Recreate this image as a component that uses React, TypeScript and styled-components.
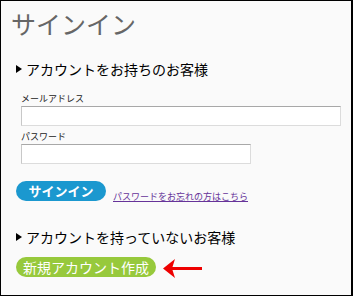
import React from 'react'
import styled, { createGlobalStyle } from 'styled-components'

const GlobalStyle = createGlobalStyle`
  html, body {
    margin: 0;
    padding: 0;
    background: #fafafa;
  }
  body {
    font-family: 'Noto Sans CJK JP', 'DejaVu Sans', sans-serif;
  }
`

const Frame = styled.div`
  box-sizing: border-box;
  width: 353px;
  height: 296px;
  border: 1px solid #000;
  border-right-width: 2px;
  background: #fafafa;
  padding: 6px 0 0 15px;
  overflow: hidden;
`

const Title = styled.h1`
  margin: 0 0 0 -5px;
  font-size: 25px;
  line-height: 32px;
  font-weight: normal;
  color: #666;
`

const SectionHeading = styled.h2<{ $gap: number }>`
  display: flex;
  align-items: center;
  margin: ${({ $gap }) => $gap}px 0 0;
  font-size: 14px;
  line-height: 20px;
  font-weight: normal;
  color: #000;

  &::before {
    content: '';
    width: 0;
    height: 0;
    border-top: 4px solid transparent;
    border-bottom: 4px solid transparent;
    border-left: 6px solid #000;
    margin-right: 4px;
  }
`

const Spacer = styled.div<{ $h: number }>`
  height: ${({ $h }) => $h}px;
`

const Field = styled.label`
  display: flex;
  flex-direction: column;
  margin-left: 5px;
`

const FieldLabel = styled.span`
  font-size: 9px;
  line-height: 12px;
  color: #222;
  margin-bottom: 1px;
`

const TextInput = styled.input<{ $width: number }>`
  box-sizing: border-box;
  width: ${({ $width }) => $width}px;
  height: 20px;
  border: 1px solid #dcdcdc;
  border-top-color: #a8a8a8;
  border-left-color: #c8c8c8;
  background: #fff;
  padding: 0 3px;
  margin: 0;
`

const Actions = styled.div`
  display: flex;
  align-items: flex-end;
  gap: 7px;
  margin-top: 17px;
`

const PillButton = styled.button<{ $color: string; $width: number; $size: number; $bold?: boolean }>`
  box-sizing: border-box;
  width: ${({ $width }) => $width}px;
  height: 20px;
  border: none;
  border-radius: 10px;
  background: ${({ $color }) => $color};
  color: #fff;
  font-family: inherit;
  font-size: ${({ $size }) => $size}px;
  font-weight: ${({ $bold }) => ($bold ? 'bold' : 'normal')};
  line-height: 20px;
  padding: 0;
  cursor: pointer;
`

const ForgotLink = styled.a`
  font-size: 9px;
  line-height: 12px;
  color: #663399;
  text-decoration: underline;
  margin-bottom: -2px;
`

const NewAccountRow = styled.div`
  display: flex;
  align-items: center;
  gap: 7px;
  margin-top: 8px;
`

const Arrow = () => (
  <svg width="40" height="21" viewBox="0 0 40 21" style={{ marginTop: 3 }}>
    <path d="M6 10.5 H39" stroke="#ee0000" strokeWidth="3" />
    <path d="M0 10.5 L12 1 L9 10.5 L12 20 Z" fill="#ee0000" />
  </svg>
)

export default function App() {
  return (
    <>
      <GlobalStyle />
      <Frame>
        <Title>サインイン</Title>
        <SectionHeading $gap={20}>アカウントをお持ちのお客様</SectionHeading>
        <Spacer $h={14} />
        <Field>
          <FieldLabel>メールアドレス</FieldLabel>
          <TextInput $width={320} type="text" />
        </Field>
        <Spacer $h={5} />
        <Field>
          <FieldLabel>パスワード</FieldLabel>
          <TextInput $width={230} type="password" />
        </Field>
        <Actions>
          <PillButton $color="#1b98cf" $width={90} $size={13} $bold>
            サインイン
          </PillButton>
          <ForgotLink href="#">パスワードをお忘れの方はこちら</ForgotLink>
        </Actions>
        <SectionHeading $gap={26}>アカウントを持っていないお客様</SectionHeading>
        <NewAccountRow>
          <PillButton $color="#97c93c" $width={140} $size={14}>
            新規アカウント作成
          </PillButton>
          <Arrow />
        </NewAccountRow>
      </Frame>
    </>
  )
}
